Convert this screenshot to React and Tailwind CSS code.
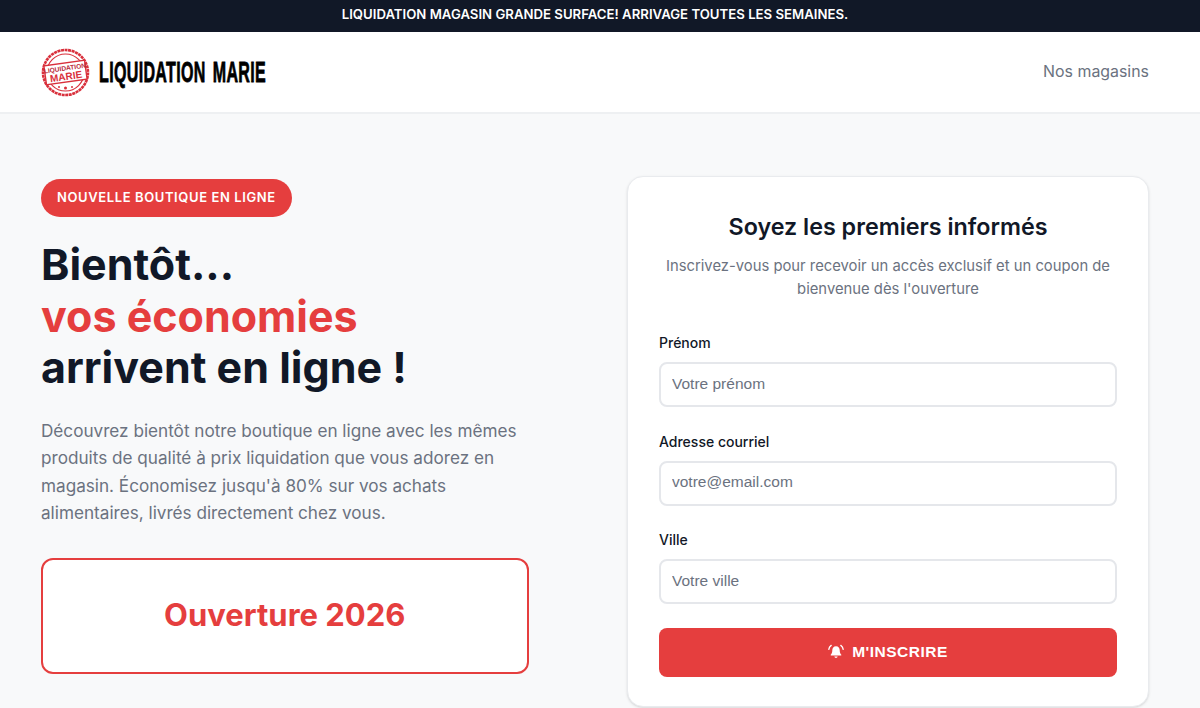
const Logo = () => (
  <div className="flex items-center gap-[9px]">
    <svg width="49" height="49" viewBox="0 0 49 49">
      <circle cx="24.5" cy="24.5" r="22.5" fill="#fff" stroke="#d9303c" strokeWidth="2.6" strokeDasharray="3 0.6" />
      <circle cx="24.5" cy="24.5" r="18.5" fill="none" stroke="#d9303c" strokeWidth="1.2" />
      <g transform="rotate(-8 24.5 24.5)">
        <rect x="4" y="15" width="41" height="19" fill="#fff" stroke="#d9303c" strokeWidth="1.4" />
        <text x="24.5" y="22.5" textAnchor="middle" fontSize="6.6" fontWeight="700" fill="#b92a3a" fontFamily="Liberation Sans">LIQUIDATION</text>
        <text x="24.5" y="32" textAnchor="middle" fontSize="10" fontWeight="900" fill="#d9303c" fontFamily="Liberation Sans">MARIE</text>
      </g>
      <circle cx="18" cy="39" r="1" fill="#d9303c" />
      <circle cx="24.5" cy="40" r="1.5" fill="#d9303c" />
      <circle cx="31" cy="39" r="1" fill="#d9303c" />
    </svg>
    <span className="font-['Liberation_Sans',sans-serif] font-bold text-[29px] leading-none text-black inline-block origin-left scale-x-[0.553] tracking-[0.6px] [word-spacing:4px] whitespace-nowrap [-webkit-text-stroke:0.8px_black]">
      LIQUIDATION MARIE
    </span>
  </div>
);

const Field = ({ label, placeholder, type = "text" }) => (
  <div>
    <label className="block text-sm font-medium leading-5 text-[#111827] mb-[9px]">{label}</label>
    <input
      type={type}
      placeholder={placeholder}
      className="block w-full h-[45px] px-[11px] pb-0.5 bg-white border-2 border-[#e5e7eb] rounded-lg text-[15.5px] font-['Liberation_Sans',sans-serif] placeholder:text-[#6b7280] outline-none"
    />
  </div>
);

export default function App() {
  return (
    <div className="h-[708px] overflow-hidden bg-[#f8f9fa] font-['Inter',sans-serif]">
      <div className="h-8 bg-[#111827] flex items-center justify-center text-white text-[13.2px] font-semibold pb-[3px] pr-2.5">
        LIQUIDATION MAGASIN GRANDE SURFACE! ARRIVAGE TOUTES LES SEMAINES.
      </div>

      <header className="h-[82px] bg-white border-b-2 border-[#eef0f2] flex items-center justify-between pl-[41px] pr-[51px]">
        <Logo />
        <a className="text-[#6b7280] text-[15.9px] pb-px">Nos magasins</a>
      </header>

      <main className="flex justify-between pl-[41px] pr-[51px] pt-[63px]">
        <div className="w-[487.5px] pt-0.5">
          <span className="inline-block bg-[#e53e3e] text-white text-[13px] font-semibold leading-[22px] tracking-[0.6px] px-4 pt-[7px] pb-[9px] rounded-full">
            NOUVELLE BOUTIQUE EN LIGNE
          </span>
          <h1 className="mt-[22px] text-[43px] font-bold leading-[51.5px] text-[#111827]">
            Bientôt...
            <br />
            <span className="text-[#e53e3e]">vos économies</span>
            <br />
            arrivent en ligne !
          </h1>
          <p className="mt-[23px] text-[17.15px] leading-[27.5px] text-[#6b7280]">
            Découvrez bientôt notre boutique en ligne avec les mêmes produits de qualité à prix liquidation que vous adorez en magasin. Économisez jusqu'à 80% sur vos achats alimentaires, livrés directement chez vous.
          </p>
          <div className="mt-[31px] h-[116px] bg-white border-2 border-[#e53e3e] rounded-xl flex items-center justify-center">
            <span className="text-[31px] font-bold text-[#e53e3e]">Ouverture 2026</span>
          </div>
        </div>

        <div className="w-[522px] h-[531px] -mt-px bg-white border border-[#e9ebee] rounded-2xl px-[31px] pt-[34px] shadow-sm">
          <h2 className="text-center text-[23.3px] font-semibold leading-8 text-[#111827]">Soyez les premiers informés</h2>
          <p className="mt-3 text-center text-[14.8px] leading-[23px] text-[#6b7280]">
            Inscrivez-vous pour recevoir un accès exclusif et un coupon de bienvenue dès l'ouverture
          </p>
          <div className="mt-8 flex flex-col gap-[24.5px]">
            <Field label="Prénom" placeholder="Votre prénom" />
            <Field label="Adresse courriel" placeholder="votre@email.com" type="email" />
            <Field label="Ville" placeholder="Votre ville" />
          </div>
          <button className="mt-6 w-full h-[49px] pb-0.5 bg-[#e53e3e] rounded-lg text-white font-bold text-[15.5px] tracking-[0.5px] flex items-center justify-center gap-2 font-['Liberation_Sans',sans-serif]">
            <svg width="16" height="16" viewBox="0 0 16 16" fill="#fff">
              <path d="M8 2.2c-2.4 0-3.7 1.8-3.7 4 0 2.4-.7 3.6-1.6 4.6-.2.3 0 .7.3.7h10c.4 0 .5-.4.3-.7-.9-1-1.6-2.2-1.6-4.6 0-2.2-1.3-4-3.7-4z" />
              <path d="M6.3 12.6h3.4c-.2.8-.9 1.3-1.7 1.3s-1.5-.5-1.7-1.3z" />
              <path d="M3.2 1.4C1.8 2.4 1 3.8.8 5.4M12.8 1.4c1.4 1 2.2 2.4 2.4 4" fill="none" stroke="#fff" strokeWidth="1.3" strokeLinecap="round" />
            </svg>
            M'INSCRIRE
          </button>
        </div>
      </main>
    </div>
  );
}
